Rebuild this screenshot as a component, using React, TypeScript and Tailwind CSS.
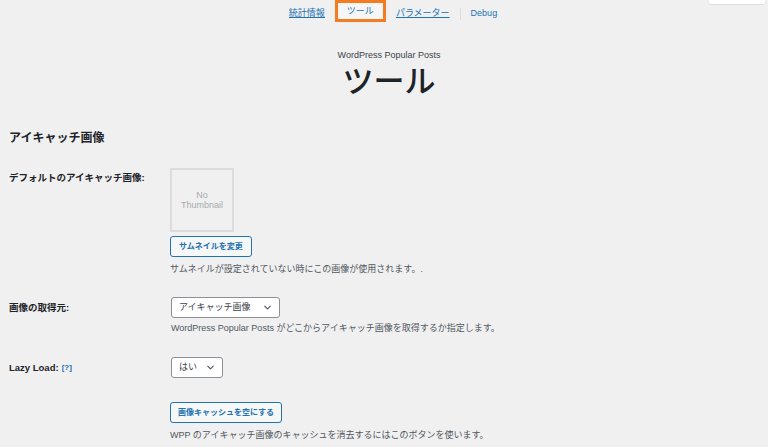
import { ChevronDown } from 'lucide-react';

const font = { fontFamily: '"Liberation Sans", "Noto Sans CJK JP", sans-serif' };

function Select({ label, width }: { label: string; width: string }) {
  return (
    <div className={`flex h-[21px] items-center justify-between rounded-[3px] border border-[#8c8f94] bg-white pl-[7px] pr-[6px] ${width}`}>
      <span className="text-[9px] text-[#3c434a]">{label}</span>
      <ChevronDown size={11} strokeWidth={2.5} className="text-[#50575e]" />
    </div>
  );
}

export default function App() {
  return (
    <div className="relative h-[447px] w-[768px] overflow-hidden bg-[#f0f0f1] text-[#1d2327]" style={font}>
      <div className="absolute right-[3px] top-0 h-[4px] w-[56px] rounded-b-[2px] bg-white shadow-[0_1px_1px_rgba(0,0,0,0.08)]" />

      {/* nav */}
      <div className="flex h-[24px] items-center justify-center pl-[18px] pt-[4px] text-[9px]">
        <a className="mr-[10px] text-[#2271b1] underline">統計情報</a>
        <a className="mt-[-6px] flex h-[22px] w-[51px] items-center justify-center border-[3px] border-[#f47b20] bg-[#f6f6f6] pt-[2px] text-[#2271b1]">ツール</a>
        <a className="ml-[10px] text-[#2271b1] underline">パラメーター</a>
        <span className="mx-[10px] h-[12px] w-px bg-[#dcdcde]" />
        <a className="text-[#2271b1]">Debug</a>
      </div>

      {/* title */}
      <div className="mt-[25px] flex flex-col items-center pl-[10px]">
        <p className="text-[9px] leading-[12px] text-[#3c434a]">WordPress Popular Posts</p>
        <h1 className="mt-[3px] text-[31px] font-medium leading-[36px]">ツール</h1>
      </div>

      <div className="px-[9px]">
        <h2 className="mt-[30px] text-[12px] font-semibold leading-[16px]">アイキャッチ画像</h2>

        {/* default thumbnail */}
        <div className="mt-[22px] flex">
          <div className="w-[161px] pt-[4px] text-[9.5px] font-bold leading-[12px]">デフォルトのアイキャッチ画像:</div>
          <div className="flex flex-col items-start">
            <div className="flex h-[64px] w-[64px] flex-col items-center justify-center border-2 border-[#dcdcde] bg-[#f0f0f1] text-center text-[9px] leading-[10px] text-[#a7aaad]">
              <span>No</span>
              <span>Thumbnail</span>
            </div>
            <button className="mt-[4px] h-[21px] rounded-[3px] border border-[#2271b1] bg-[#f6f7f7] px-[8px] text-[8px] font-bold text-[#2271b1]">サムネイルを変更</button>
            <p className="mt-[6px] text-[9px] leading-[12px] text-[#50575e]">サムネイルが設定されていない時にこの画像が使用されます。.</p>
          </div>
        </div>

        {/* source */}
        <div className="mt-[22px] flex">
          <div className="w-[162px] pt-[5px] text-[9.5px] font-bold leading-[12px]">画像の取得元:</div>
          <div className="flex flex-col items-start">
            <Select label="アイキャッチ画像" width="w-[109px]" />
            <p className="mt-[4px] text-[9px] leading-[12px] text-[#50575e]">WordPress Popular Posts がどこからアイキャッチ画像を取得するか指定します。</p>
          </div>
        </div>

        {/* lazy load */}
        <div className="mt-[23px] flex">
          <div className="flex w-[162px] items-start pt-[5px] text-[9.5px] font-bold leading-[12px]">
            Lazy Load:
            <span className="ml-[3px] text-[8px] text-[#2271b1]">[?]</span>
          </div>
          <Select label="はい" width="w-[52px]" />
        </div>

        {/* cache */}
        <div className="mt-[24px] flex">
          <div className="w-[161px]" />
          <div className="flex flex-col items-start">
            <button className="h-[21px] rounded-[3px] border border-[#2271b1] bg-[#f6f7f7] px-[7px] text-[8px] font-bold text-[#2271b1]">画像キャッシュを空にする</button>
            <p className="mt-[6px] text-[9px] leading-[12px] text-[#50575e]">WPP のアイキャッチ画像のキャッシュを消去するにはこのボタンを使います。</p>
          </div>
        </div>
      </div>
    </div>
  );
}
